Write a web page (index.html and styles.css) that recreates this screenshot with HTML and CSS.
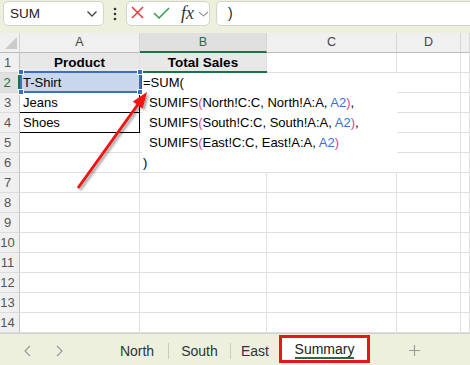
FILE: index.html
```html
<!DOCTYPE html>
<html>
<head>
<meta charset="utf-8">
<link rel="stylesheet" href="styles.css">
</head>
<body>
<div class="app">
  <div class="fbar">
    <div class="namebox"><span>SUM</span>
      <svg class="nbchev" width="12" height="8" viewBox="0 0 12 8"><path d="M1.5 1.5 L6 6 L10.5 1.5" fill="none" stroke="#444" stroke-width="1.3"/></svg>
    </div>
    <div class="dots"><svg width="4" height="14" viewBox="0 0 4 14"><circle cx="2" cy="2" r="1.3" fill="#333"/><circle cx="2" cy="7" r="1.3" fill="#333"/><circle cx="2" cy="12" r="1.3" fill="#333"/></svg></div>
    <div class="fbtns">
      <svg class="fxicons" width="50" height="23" viewBox="0 0 50 23"><path d="M5 5 L16 16 M16 5 L5 16" stroke="#e23b3b" stroke-width="1.5" fill="none"/><path d="M27 11 L32 16 L42 6" stroke="#2f9a4c" stroke-width="1.5" fill="none"/></svg>
      <span class="fx">fx</span>
      <svg class="fxchev" width="12" height="23" viewBox="0 0 12 23"><path d="M1 10 L5.5 14 L10 10" stroke="#9a9a9a" stroke-width="1.3" fill="none"/></svg>
    </div>
    <div class="finput">)</div>
  </div>

  <div class="sheet">
    <div class="corner"><svg width="20" height="20" viewBox="0 0 20 20"><path d="M17 4 L17 16 L5 16 Z" fill="#cbcbcb"/></svg></div>
    <div class="ch">A</div><div class="ch sel">B</div><div class="ch">C</div><div class="ch">D</div><div class="ch"></div>

    <div class="rh">1</div><div class="c hd">Product</div><div class="c hd">Total Sales</div><div class="c"></div><div class="c"></div><div class="c"></div>
    <div class="rh act">2</div><div class="c selc">T-Shirt</div><div class="c"></div><div class="c"></div><div class="c"></div><div class="c"></div>
    <div class="rh">3</div><div class="c tb">Jeans</div><div class="c"></div><div class="c"></div><div class="c"></div><div class="c"></div>
    <div class="rh">4</div><div class="c tb">Shoes</div><div class="c"></div><div class="c"></div><div class="c"></div><div class="c"></div>
    <div class="rh">5</div><div class="c"></div><div class="c"></div><div class="c"></div><div class="c"></div><div class="c"></div>
    <div class="rh">6</div><div class="c"></div><div class="c"></div><div class="c"></div><div class="c"></div><div class="c"></div>
    <div class="rh">7</div><div class="c"></div><div class="c"></div><div class="c"></div><div class="c"></div><div class="c"></div>
    <div class="rh">8</div><div class="c"></div><div class="c"></div><div class="c"></div><div class="c"></div><div class="c"></div>
    <div class="rh">9</div><div class="c"></div><div class="c"></div><div class="c"></div><div class="c"></div><div class="c"></div>
    <div class="rh">10</div><div class="c"></div><div class="c"></div><div class="c"></div><div class="c"></div><div class="c"></div>
    <div class="rh">11</div><div class="c"></div><div class="c"></div><div class="c"></div><div class="c"></div><div class="c"></div>
    <div class="rh">12</div><div class="c"></div><div class="c"></div><div class="c"></div><div class="c"></div><div class="c"></div>
    <div class="rh">13</div><div class="c"></div><div class="c"></div><div class="c"></div><div class="c"></div><div class="c"></div>
    <div class="rh">14</div><div class="c"></div><div class="c"></div><div class="c"></div><div class="c"></div><div class="c"></div>

    <div class="edit">
      <div class="fl">=SUM(</div>
      <div class="fl ind">SUMIFS<span class="pk">(</span>North!C:C, North!A:A, <span class="bl">A2</span><span class="pk">)</span>,</div>
      <div class="fl ind">SUMIFS<span class="pk">(</span>South!C:C, South!A:A, <span class="bl">A2</span><span class="pk">)</span>,</div>
      <div class="fl ind">SUMIFS<span class="pk">(</span>East!C:C, East!A:A, <span class="bl">A2</span><span class="pk">)</span></div>
      <div class="fl">)</div>
    </div>
    <div class="active"></div>
    <div class="selbox"><i class="h h1"></i><i class="h h2"></i><i class="h h3"></i><i class="h h4"></i></div>

    <svg class="arrow" width="470" height="300" viewBox="0 0 470 300">
      <defs>
        <filter id="sh" x="-20%" y="-20%" width="140%" height="140%">
          <feDropShadow dx="2" dy="2" stdDeviation="1.2" flood-color="#000" flood-opacity="0.35"/>
        </filter>
      </defs>
      <g filter="url(#sh)">
        <line x1="78" y1="155" x2="139" y2="70" stroke="#f01212" stroke-width="3"/>
        <polygon points="147,59 142.6,75.5 132.8,68.5" fill="#f01212"/>
      </g>
    </svg>
  </div>

  <div class="tabbar">
    <div class="nav">
      <svg width="7" height="12" viewBox="0 0 7 12"><path d="M6 1 L1 6 L6 11" stroke="#9a9a9a" stroke-width="1.2" fill="none"/></svg>
      <svg width="7" height="12" viewBox="0 0 7 12"><path d="M1 1 L6 6 L1 11" stroke="#9a9a9a" stroke-width="1.2" fill="none"/></svg>
    </div>
    <div class="tab w62">North</div>
    <div class="sep"></div>
    <div class="tab w61">South</div>
    <div class="sep"></div>
    <div class="tab w48">East</div>
    <div class="tab cur"><span>Summary</span></div>
    <div class="plus"><svg width="11" height="11" viewBox="0 0 11 11"><path d="M5.5 0 V11 M0 5.5 H11" stroke="#9a9a9a" stroke-width="1.1"/></svg></div>
  </div>
</div>
</body>
</html>
```

FILE: styles.css
```css
* { box-sizing: border-box; }
html, body { margin: 0; padding: 0; }
body {
  width: 470px;
  height: 365px;
  overflow: hidden;
  font-family: "Liberation Sans", Arial, sans-serif;
  background: #fff;
}
.app { width: 470px; height: 365px; overflow: hidden; }

/* formula bar */
.fbar {
  height: 33px;
  background: #edf0dd;
  display: flex;
  align-items: flex-start;
  padding-top: 1px;
  overflow: hidden;
}
.fbar > * { flex: none; }
.namebox {
  margin-left: 3px;
  width: 101px;
  height: 25px;
  border: 1px solid #d3d5ca;
  border-radius: 5px;
  background: #fff;
  display: flex;
  align-items: center;
  justify-content: space-between;
  padding: 0 5px 0 6px;
  font-size: 13.5px;
  color: #222;
}
.dots {
  width: 22px;
  height: 25px;
  display: flex;
  align-items: center;
  justify-content: center;
}
.fbtns {
  width: 84px;
  height: 25px;
  border: 1px solid #d3d5ca;
  border-radius: 5px;
  background: #fff;
  display: flex;
  align-items: flex-start;
}
.fbtns > * { flex: none; }
.fx {
  font-family: "Liberation Serif", "Times New Roman", serif;
  font-style: italic;
  font-size: 18px;
  line-height: 22px;
  color: #333;
  margin-left: 4px;
  width: 17px;
}
.finput {
  margin-left: 6px;
  width: 270px;
  height: 25px;
  border: 1px solid #d3d5ca;
  border-radius: 5px;
  background: #fff;
  padding-left: 11px;
  font-size: 14px;
  line-height: 22px;
  color: #222;
}

/* sheet grid */
.sheet {
  position: relative;
  display: grid;
  grid-template-columns: 20px 120px 127px 130px 64px 9px;
  grid-auto-rows: 20px;
  height: 300px;
}
.corner {
  background: #f0f0f0;
  border-right: 1px solid #d5d5d5;
  border-bottom: 1px solid #bcbcbc;
}
.corner svg { display: block; }
.ch {
  background: #f0f0f0;
  border-right: 1px solid #d5d5d5;
  border-bottom: 1px solid #bcbcbc;
  text-align: center;
  font-size: 12.5px;
  line-height: 19px;
  color: #444;
}
.ch.sel {
  background: #e0e0e0;
  border-bottom: 2px solid #1e7145;
  color: #1e7145;
}
.rh {
  background: #f0f0f0;
  border-right: 1px solid #c4c4c4;
  border-bottom: 1px solid #dcdcdc;
  text-align: center;
  padding-right: 4px;
  font-size: 13px;
  line-height: 19px;
  color: #555;
}
.rh.act {
  background: #e0e0e0;
  border-right: 2px solid #1e7145;
  color: #1e7145;
}
.c {
  background: #fff;
  border-right: 1px solid #e0e0e0;
  border-bottom: 1px solid #e0e0e0;
  padding-left: 3px;
  font-size: 13px;
  line-height: 19px;
  color: #000;
  white-space: nowrap;
  overflow: hidden;
}
.c.hd {
  background: #e8e8e8;
  font-weight: bold;
  font-size: 13.5px;
  text-align: center;
  padding-left: 0;
}
.c.tb {
  border-right-color: #000;
  border-bottom-color: #000;
}
.c.selc { background: #c8d6ee; }

/* overlays */
.edit {
  position: absolute;
  left: 142px;
  top: 40px;
  width: 255px;
  height: 99px;
  background: #fff;
  font-size: 13px;
  line-height: 20px;
  color: #000;
  white-space: nowrap;
  padding-left: 1px;
}
.fl.ind { padding-left: 6px; }
.pk { color: #d9468a; }
.bl { color: #3a70d6; }
.active {
  position: absolute;
  left: 140px;
  top: 38px;
  width: 127px;
  height: 22px;
  border-top: 2px solid #1e7145;
  border-left: 2px solid #1e7145;
}
.selbox {
  position: absolute;
  left: 20px;
  top: 38px;
  width: 121px;
  height: 22px;
  border: 2px solid #3a6fc4;
}
.h {
  position: absolute;
  width: 6px;
  height: 6px;
  background: #3a6fc4;
  border: 1px solid #fff;
}
.h1 { left: -4px; top: -4px; }
.h2 { right: -4px; top: -4px; }
.h3 { left: -4px; bottom: -4px; }
.h4 { right: -4px; bottom: -4px; }
.arrow {
  position: absolute;
  left: 0;
  top: 0;
  pointer-events: none;
}

/* sheet tabs */
.tabbar {
  height: 32px;
  background: #edf0dd;
  border-top: 1px solid #d0d0d0;
  display: flex;
  align-items: center;
}
.tabbar > * { flex: none; }
.nav {
  width: 106px;
  display: flex;
  align-items: center;
  gap: 25px;
  padding-left: 24px;
  padding-top: 2px;
}
.nav svg { display: block; }
.tab {
  text-align: center;
  font-size: 14px;
  color: #333;
  padding-top: 3px;
}
.w62 { width: 62px; }
.w61 { width: 61px; }
.w48 { width: 48px; }
.sep {
  width: 1px;
  height: 16px;
  background: #c9ccbf;
  margin-top: 2px;
}
.tab.cur {
  width: 91px;
  height: 28px;
  align-self: flex-start;
  margin-top: 1px;
  border: 3px solid #e8161c;
  background: #fff;
  display: flex;
  align-items: center;
  justify-content: center;
  padding-top: 0;
  color: #222;
}
.tab.cur span {
  display: inline-block;
  line-height: 16px;
  padding-top: 2px;
  border-bottom: 2px solid #1e7145;
}
.plus {
  margin-left: 39px;
  display: flex;
  align-items: center;
  padding-top: 1px;
}
.plus svg { display: block; }
```
